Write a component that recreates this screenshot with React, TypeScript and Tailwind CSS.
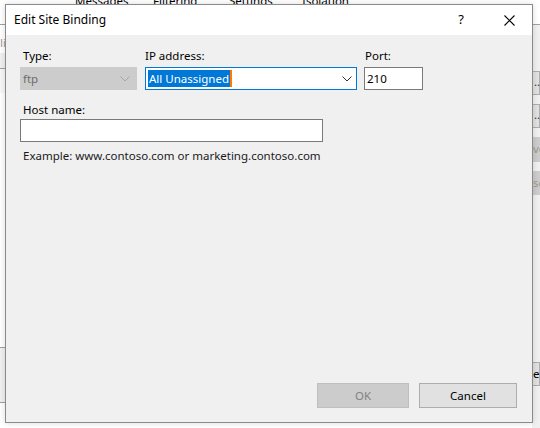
import React from "react";

const font = { fontFamily: '"Segoe UI", "Noto Sans", "Open Sans", sans-serif' };

function Chevron({ color }: { color: string }) {
  return (
    <svg width="10" height="6" viewBox="0 0 10 6" fill="none">
      <path d="M0.5 0.5 L5 5 L9.5 0.5" stroke={color} strokeWidth="1" />
    </svg>
  );
}

export default function App() {
  return (
    <div className="relative w-[540px] h-[428px] overflow-hidden bg-white text-[11.5px] text-black" style={font}>
      {/* background app */}
      <div className="flex flex-col h-full">
        <div className="flex h-[25px] border-b border-[#a0a0a0] items-start">
          <div className="flex mt-[-8px] pl-[75px] text-[#000]">
            <span className="w-[78px]">Messages</span>
            <span className="w-[76px]">Filtering</span>
            <span className="w-[73px]">Settings</span>
            <span>Isolation</span>
          </div>
        </div>
        <div className="flex justify-between flex-1">
          <div className="flex flex-col w-[6px]">
            <div className="h-[20px] mt-[8px] text-[#999] leading-[20px] overflow-hidden">li</div>
            <div className="h-[16px] bg-[#f0f0f0] border-b border-[#a0a0a0]"></div>
            <div className="h-[24px] bg-[#f7f7f7]"></div>
            <div className="flex-1"></div>
            <div className="h-[56px] border-t border-[#a0a0a0] bg-[#f0f0f0] mb-[25px] border-b"></div>
          </div>
          <div className="flex flex-col w-[8px] bg-[#f0f0f0] pt-[46px] gap-[9px]">
            <div className="h-[24px] bg-[#e1e1e1] border border-[#adadad] text-[#333] leading-[20px] pl-[1px]">...</div>
            <div className="h-[24px] bg-[#e1e1e1] border border-[#adadad] text-[#333] leading-[20px] pl-[1px]">...</div>
            <div className="h-[25px] bg-[#cccccc] text-[#999] leading-[24px] pl-[1px]">ve</div>
            <div className="h-[24px] bg-[#cccccc] text-[#999] leading-[24px] pl-[1px]">se</div>
            <div className="h-[149px]"></div>
            <div className="h-[24px] bg-[#e1e1e1] border border-[#adadad] text-[#000] leading-[22px]">e</div>
          </div>
        </div>
      </div>

      {/* dialog */}
      <div className="absolute left-[5px] top-[4px] w-[528px] h-[419px] border border-[#8a8a8a] bg-[#f0f0f0] flex flex-col shadow-[0_0_6px_rgba(0,0,0,0.15)]">
        <div className="h-[30px] bg-white flex items-center pl-[8px] shrink-0">
          <span className="flex-1 text-[12px]">Edit Site Binding</span>
          <span className="w-[46px] text-center text-[13px] mr-[2px]">?</span>
          <span className="w-[46px] flex justify-center">
            <svg width="11" height="11" viewBox="0 0 11 11">
              <path d="M0.5 0.5 L10.5 10.5 M10.5 0.5 L0.5 10.5" stroke="#000" strokeWidth="1.1" />
            </svg>
          </span>
        </div>
        <div className="flex-1 flex flex-col pl-[14px] pr-[15px] pt-[13px] pb-[14px]">
          <div className="flex">
            <div className="flex flex-col w-[117px] mr-[8px]">
              <span className="pl-[3px] h-[19px] leading-[16px]">Type:</span>
              <div className="h-[23px] bg-[#cccccc] border border-[#cccccc] flex items-center justify-between pl-[2px] pr-[6px] text-[#6d6d6d]">
                <span>ftp</span>
                <Chevron color="#a6a6a6" />
              </div>
            </div>
            <div className="flex flex-col w-[212px] mr-[7px]">
              <span className="h-[19px] leading-[16px]">IP address:</span>
              <div className="h-[23px] bg-white border border-[#0078d7] flex items-center justify-between pl-[2px] pr-[4px]">
                <span className="bg-[#0078d7] text-white leading-[17px] px-[1px] border-r-2 border-[#ff7b00]">All Unassigned</span>
                <Chevron color="#333" />
              </div>
            </div>
            <div className="flex flex-col w-[59px]">
              <span className="pl-[1px] h-[19px] leading-[16px]">Port:</span>
              <div className="h-[23px] bg-white border border-[#7a7a7a] flex items-center pl-[2px]">210</div>
            </div>
          </div>
          <span className="pl-[3px] mt-[12px] h-[17px] leading-[16px]">Host name:</span>
          <div className="w-[303px] h-[23px] bg-white border border-[#7a7a7a]"></div>
          <span className="pl-[3px] mt-[6px] leading-[16px] text-[#1a1a1a]">Example: www.contoso.com or marketing.contoso.com</span>
          <div className="flex-1"></div>
          <div className="flex justify-end gap-[10px]">
            <div className="w-[92px] h-[25px] bg-[#cccccc] border border-[#bfbfbf] flex items-center justify-center text-[#838383]">OK</div>
            <div className="w-[98px] h-[25px] bg-[#e1e1e1] border border-[#adadad] flex items-center justify-center">Cancel</div>
          </div>
        </div>
      </div>
    </div>
  );
}
